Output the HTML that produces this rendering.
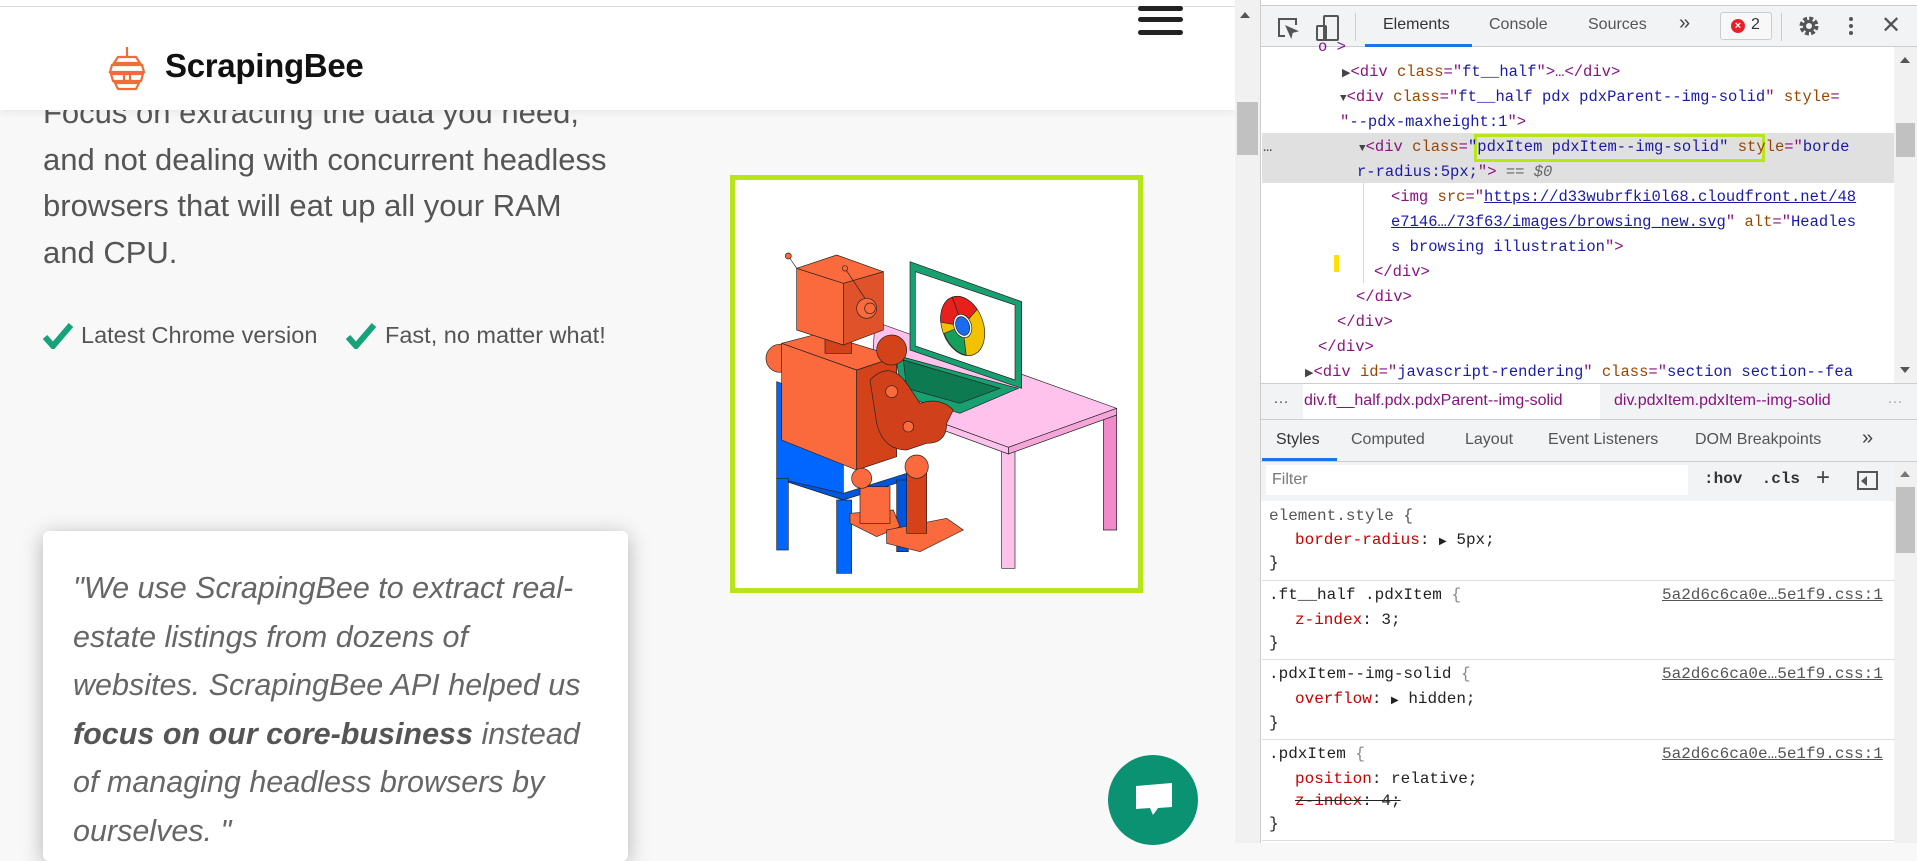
<!DOCTYPE html>
<html><head><meta charset="utf-8"><style>
*{margin:0;padding:0;box-sizing:border-box}
body{width:1917px;height:843px;overflow:hidden;position:relative;background:#f8f8f8;font-family:"Liberation Sans",sans-serif}
.a{position:absolute;white-space:nowrap}
.m{font-family:"Liberation Mono",monospace;font-size:16px}
.tg{color:#881280}.an{color:#994500}.av{color:#1a1aa6}.pn{color:#c80000}
</style></head><body>
<!-- page -->
<div class="a" style="left:43px;top:90px;font-size:31px;line-height:46.5px;color:#555;white-space:nowrap;width:620px">Focus on extracting the data you need,<br>and not dealing with concurrent headless<br>browsers that will eat up all your RAM<br>and CPU.</div>
<div class="a" style="left:0;top:0;width:1235px;height:110px;background:#fff;box-shadow:0 2px 8px rgba(0,0,0,.08);border-top:1px solid #fff">
 <div class="a" style="left:0;top:5px;width:1235px;height:1px;background:#ddd"></div>
 <svg class="a" style="left:106px;top:46px" width="42" height="44" viewBox="0 0 42 44" fill="none" stroke="#f26b3a" stroke-width="2.2"><line x1="21" y1="0" x2="21" y2="9"/><path d="M12 10h18l4 6H8zM6 18h30l2 7H4zM5 27h32l-2 7H7zM9 36h24l-3 6H12z"/><rect x="18" y="27" width="6" height="7"/></svg>
 <div class="a" style="left:165px;top:46px;font-size:33px;font-weight:bold;color:#111;letter-spacing:-0.3px">ScrapingBee</div>
 <div class="a" style="left:1138px;top:5px;width:45px;height:5px;background:#222;border-radius:3px"></div>
 <div class="a" style="left:1138px;top:16px;width:45px;height:5px;background:#222;border-radius:3px"></div>
 <div class="a" style="left:1138px;top:29px;width:45px;height:5px;background:#222;border-radius:3px"></div>
</div>
<svg class="a" style="left:43px;top:323px" width="30" height="26" viewBox="0 0 30 26"><path d="M2 14l8 9L28 2" stroke="#17a37a" stroke-width="6" fill="none"/></svg>
<div class="a" style="left:81px;top:322px;font-size:23.5px;color:#555">Latest Chrome version</div>
<svg class="a" style="left:346px;top:323px" width="30" height="26" viewBox="0 0 30 26"><path d="M2 14l8 9L28 2" stroke="#17a37a" stroke-width="6" fill="none"/></svg>
<div class="a" style="left:385px;top:322px;font-size:23.5px;color:#555">Fast, no matter what!</div>
<div class="a" style="left:730px;top:175px;width:413px;height:418px;border:5px solid #b8e41a;background:#fff"></div>
<svg class="a" style="left:760px;top:240px" width="360" height="340" viewBox="0 0 1080 1020" stroke="#222" stroke-width="2">
 <polygon points="725,630 765,615 765,985 725,985" fill="#ffc2ec"/><polygon points="1030,520 1070,505 1070,870 1030,870" fill="#f08acb"/>
 <polygon points="345,245 1070,505 745,622 330,470" fill="#ffc2ec"/>
 <polygon points="745,622 1070,505 1070,525 745,642" fill="#f5a5d8"/>
 <polygon points="330,470 745,622 745,642 330,490" fill="#ffc2ec"/>
 <polygon points="450,65 785,185 785,445 450,330" fill="#18a070"/>
 <polygon points="466,95 765,195 765,420 466,318" fill="#fff"/>
 <polygon points="405,345 775,445 600,520 430,470" fill="#18a070"/>
 <polygon points="430,360 720,445 600,490 440,445" fill="#0d7a52"/>
 <g transform="rotate(-20 608 258)"><ellipse cx="608" cy="258" rx="62" ry="92" fill="#f2c200"/><path d="M608 166a62 92 0 0 1 58 60L608 258z" fill="#e8201c"/><path d="M550 225a62 92 0 0 1 58-59L608 258z" fill="#e8201c"/><path d="M548 260a62 92 0 0 0 40 84L608 258z" fill="#14a05a"/><ellipse cx="608" cy="258" rx="26" ry="36" fill="#fff"/><ellipse cx="608" cy="258" rx="20" ry="29" fill="#1a6cf0"/></g>
 <polygon points="50,425 250,495 250,780 50,715" fill="#0066ff"/>
 <polygon points="50,715 250,780 440,720 440,700 250,760" fill="#0055dd"/>
 <rect x="50" y="715" width="35" height="215" fill="#0066ff"/><rect x="230" y="780" width="45" height="220" fill="#0066ff"/><rect x="410" y="720" width="35" height="215" fill="#0055dd"/>
 <polygon points="270,820 400,810 420,860 350,890 270,850" fill="#fa6a3c"/><polygon points="380,870 560,835 610,870 480,935 380,910" fill="#fa6a3c"/>
 <rect x="300" y="740" width="90" height="110" fill="#fa6a3c"/><rect x="440" y="690" width="60" height="190" fill="#d4421a"/>
 <circle cx="60" cy="355" r="42" fill="#fa6a3c"/>
 <polygon points="65,310 290,390 290,690 65,600" fill="#fa6a3c"/>
 <polygon points="290,390 410,350 410,650 290,690" fill="#d4421a"/>
 <polygon points="65,310 180,280 410,350 290,390" fill="#fa6a3c"/>
 <circle cx="395" cy="330" r="45" fill="#d4421a"/>
 <path d="M330 420q60-60 110 10l40 60q60-20 100 20l-20 40q0 60-60 60l-60 20q-70 0-90-80z" fill="#d0401a"/>
 <circle cx="395" cy="455" r="18" fill="#fa6a3c"/><circle cx="445" cy="560" r="16" fill="#fa6a3c"/>
 <circle cx="305" cy="715" r="30" fill="#fa6a3c"/><circle cx="470" cy="680" r="35" fill="#fa6a3c"/>
 <rect x="195" y="295" width="80" height="45" fill="#d4421a"/>
 <polygon points="110,85 250,130 250,315 110,270" fill="#fa6a3c"/>
 <polygon points="250,130 370,95 370,270 250,315" fill="#e0522a"/>
 <polygon points="110,85 230,45 370,95 250,130" fill="#fa6a3c"/>
 <circle cx="320" cy="205" r="30" fill="#fa6a3c"/><circle cx="330" cy="205" r="16" fill="#fa6a3c"/>
 <line x1="110" y1="85" x2="85" y2="48"/><circle cx="85" cy="48" r="9" fill="#fa6a3c"/>
 <line x1="255" y1="85" x2="315" y2="175"/><circle cx="255" cy="85" r="8" fill="#fa6a3c"/>
</svg>
<div class="a" style="left:43px;top:531px;width:585px;height:330px;background:#fff;border-radius:6px;box-shadow:0 4px 22px rgba(0,0,0,.28)"></div>
<div class="a" style="left:73px;top:564px;font-size:30.5px;line-height:48.6px;color:#666;font-style:italic;white-space:nowrap">"We use ScrapingBee to extract real-<br>estate listings from dozens of<br>websites. ScrapingBee API helped us<br><b style="color:#555">focus on our core-business</b> instead<br>of managing headless browsers by<br>ourselves. "</div>
<div class="a" style="left:1108px;top:755px;width:90px;height:90px;border-radius:50%;background:#0a9272"></div>
<svg class="a" style="left:1133px;top:780px" width="42" height="42" viewBox="0 0 42 42"><path d="M3 6l36-3v24l-14 1-5 7-3-7-14 1z" fill="#fff"/></svg>
<!-- page scrollbar -->
<div class="a" style="left:1235px;top:0;width:26px;height:843px;background:#f1f1f1;border-right:1px solid #ccc"></div>
<div class="a" style="left:1240px;top:12px;width:0;height:0;border:5px solid transparent;border-bottom:6px solid #555;border-top:0"></div>
<div class="a" style="left:1237px;top:102px;width:21px;height:53px;background:#c1c1c1"></div>
<!-- devtools -->
<div class="a" style="left:1261px;top:0;width:656px;height:843px;background:#fff"></div>
<div class="a" style="left:1261px;top:5px;width:656px;height:42px;background:#f1f3f4;border-top:1px solid #ccc;border-bottom:1px solid #cbcdd1"></div>
<svg class="a" style="left:1277px;top:17px" width="22" height="22" viewBox="0 0 22 22" fill="none" stroke="#555" stroke-width="2"><path d="M8 19H2V2h17v6"/><path d="M10 10l9 4-4 1-1 4z" fill="#555"/></svg>
<svg class="a" style="left:1316px;top:15px" width="24" height="26" viewBox="0 0 24 26" fill="none" stroke="#555" stroke-width="2"><rect x="8" y="1" width="14" height="24" rx="1"/><rect x="1" y="11" width="9" height="14" rx="1"/></svg>
<div class="a" style="left:1355px;top:13px;width:1px;height:28px;background:#ccc"></div>
<div class="a" style="left:1383px;top:16px;font-size:16px;color:#333">Elements</div>
<div class="a" style="left:1365px;top:44px;width:107px;height:3px;background:#1a73e8"></div>
<div class="a" style="left:1489px;top:16px;font-size:16px;color:#555">Console</div>
<div class="a" style="left:1588px;top:16px;font-size:16px;color:#555">Sources</div>
<div class="a" style="left:1679px;top:12px;font-size:20px;color:#444">»</div>
<div class="a" style="left:1720px;top:12px;width:52px;height:28px;border:1px solid #ccc;border-radius:3px;background:#f8f8f8"></div>
<div class="a" style="left:1731px;top:19px;width:14px;height:14px;border-radius:50%;background:#e8202a;color:#fff;font-size:11px;font-weight:bold;text-align:center;line-height:14px">×</div>
<div class="a" style="left:1751px;top:16px;font-size:16px;color:#333">2</div>
<div class="a" style="left:1781px;top:13px;width:1px;height:28px;background:#ccc"></div>
<svg class="a" style="left:1798px;top:15px" width="22" height="22" viewBox="0 0 22 22"><circle cx="11" cy="11" r="7" fill="none" stroke="#555" stroke-width="5" stroke-dasharray="3.5 2"/><circle cx="11" cy="11" r="6" fill="#555"/><circle cx="11" cy="11" r="3" fill="#f1f3f4"/></svg>
<div class="a" style="left:1849px;top:17px;width:4px;height:4px;border-radius:50%;background:#555;box-shadow:0 7px 0 #555,0 14px 0 #555"></div>
<div class="a" style="left:1881px;top:11px;font-size:24px;color:#555">✕</div>
<!-- dom tree -->
<div class="a" style="left:1262px;top:133px;width:632px;height:50px;background:#e0e0e0"></div>
<div class="a" style="left:1474px;top:134px;width:291px;height:28px;border:3px solid #b8e41a"></div>
<div class="a" style="left:1363px;top:183px;width:1px;height:100px;background:#c8d8ee"></div>
<div class="a" style="left:1334px;top:255px;width:5px;height:17px;background:#ffe000"></div>
<div class="a m" style="left:1262px;top:35px;width:632px;height:345px;overflow:hidden;line-height:25px;font-size:15.5px">
 <div class="a tg" style="left:56px;top:0">o &gt;</div>
 <div class="a" style="left:80px;top:25px"><span style="color:#444;font-size:11px">▶</span><span class="tg">&lt;div</span> <span class="an">class</span><span class="tg">="</span><span class="av">ft__half</span><span class="tg">"&gt;…&lt;/div&gt;</span></div>
 <div class="a" style="left:78px;top:50px"><span style="color:#444;font-size:11px">▼</span><span class="tg">&lt;div</span> <span class="an">class</span><span class="tg">="</span><span class="av">ft__half pdx pdxParent--img-solid</span><span class="tg">"</span> <span class="an">style</span><span class="tg">=</span></div>
 <div class="a" style="left:78px;top:75px"><span class="tg">"</span><span class="av">--pdx-maxheight:1</span><span class="tg">"&gt;</span></div>
 <div class="a" style="left:1px;top:100px;color:#444">…</div>
 <div class="a" style="left:97px;top:100px"><span style="color:#444;font-size:11px">▼</span><span class="tg">&lt;div</span> <span class="an">class</span><span class="tg">=</span><span class="av">"pdxItem pdxItem--img-solid"</span> <span class="an">style</span><span class="tg">="</span><span class="av">borde</span></div>
 <div class="a" style="left:95px;top:125px"><span class="av">r-radius:5px;</span><span class="tg">"&gt;</span> <span style="color:#666;font-style:italic">== $0</span></div>
 <div class="a" style="left:129px;top:150px"><span class="tg">&lt;img</span> <span class="an">src</span><span class="tg">="</span><span class="av" style="text-decoration:underline">https://d33wubrfki0l68.cloudfront.net/48</span></div>
 <div class="a" style="left:129px;top:175px"><span class="av" style="text-decoration:underline">e7146…/73f63/images/browsing_new.svg</span><span class="tg">"</span> <span class="an">alt</span><span class="tg">="</span><span class="av">Headles</span></div>
 <div class="a" style="left:129px;top:200px"><span class="av">s browsing illustration</span><span class="tg">"&gt;</span></div>
 <div class="a tg" style="left:112px;top:225px">&lt;/div&gt;</div>
 <div class="a tg" style="left:94px;top:250px">&lt;/div&gt;</div>
 <div class="a tg" style="left:75px;top:275px">&lt;/div&gt;</div>
 <div class="a tg" style="left:56px;top:300px">&lt;/div&gt;</div>
 <div class="a" style="left:43px;top:325px"><span style="color:#444;font-size:11px">▶</span><span class="tg">&lt;div</span> <span class="an">id</span><span class="tg">="</span><span class="av">javascript-rendering</span><span class="tg">"</span> <span class="an">class</span><span class="tg">="</span><span class="av">section section--fea</span></div>
</div>
<div class="a" style="left:1894px;top:47px;width:23px;height:336px;background:#f1f1f1"></div>
<div class="a" style="left:1900px;top:57px;border:5px solid transparent;border-bottom:6px solid #555;border-top:0"></div>
<div class="a" style="left:1896px;top:123px;width:19px;height:34px;background:#c1c1c1"></div>
<div class="a" style="left:1900px;top:367px;border:5px solid transparent;border-top:6px solid #555;border-bottom:0"></div>
<!-- breadcrumbs -->
<div class="a" style="left:1261px;top:383px;width:656px;height:37px;background:#f1f3f4;border-top:1px solid #cbcdd1;border-bottom:1px solid #cbcdd1"></div>
<div class="a" style="left:1273px;top:390px;font-size:16px;color:#555">…</div>
<div class="a" style="left:1303px;top:384px;width:297px;height:35px;background:#fff"></div>
<div class="a" style="left:1304px;top:392px;font-size:16px;color:#881280">div.ft__half.pdx.pdxParent--img-solid</div>
<div class="a" style="left:1614px;top:392px;font-size:16px;color:#881280">div.pdxItem.pdxItem--img-solid</div>
<div class="a" style="left:1887px;top:390px;font-size:16px;color:#aaa">…</div>
<!-- styles tabs -->
<div class="a" style="left:1261px;top:420px;width:656px;height:42px;background:#f1f3f4;border-bottom:1px solid #cbcdd1"></div>
<div class="a" style="left:1276px;top:431px;font-size:16px;color:#333">Styles</div>
<div class="a" style="left:1262px;top:458px;width:75px;height:3px;background:#1a73e8"></div>
<div class="a" style="left:1351px;top:431px;font-size:16px;color:#555">Computed</div>
<div class="a" style="left:1465px;top:431px;font-size:16px;color:#555">Layout</div>
<div class="a" style="left:1548px;top:431px;font-size:16px;color:#555">Event Listeners</div>
<div class="a" style="left:1695px;top:431px;font-size:16px;color:#555">DOM Breakpoints</div>
<div class="a" style="left:1862px;top:427px;font-size:20px;color:#444">»</div>
<div class="a" style="left:1261px;top:462px;width:633px;height:39px;background:#f1f3f4"></div>
<div class="a" style="left:1266px;top:465px;width:422px;height:30px;background:#fff"></div>
<div class="a" style="left:1272px;top:471px;font-size:16px;color:#777">Filter</div>
<div class="a m" style="left:1704px;top:470px;font-weight:bold;color:#333">:hov&nbsp;&nbsp;.cls</div>
<div class="a" style="left:1816px;top:464px;font-size:24px;color:#444">+</div>
<div class="a" style="left:1857px;top:471px;width:21px;height:19px;border:2px solid #555"></div>
<div class="a" style="left:1861px;top:476px;border:5px solid transparent;border-right:6px solid #555;border-left:0"></div>
<!-- rules -->
<div class="a m" style="left:1262px;top:501px;width:632px;height:342px;line-height:24px;color:#222">
 <div class="a" style="left:7px;top:3px;color:#555">element.style {</div>
 <div class="a" style="left:33px;top:27px"><span class="pn">border-radius</span>: <span style="font-size:10px">▶</span> 5px;</div>
 <div class="a" style="left:7px;top:50px">}</div>
 <div class="a" style="left:0;top:79px;width:632px;height:1px;background:#ddd"></div>
 <div class="a" style="left:7px;top:82px">.ft__half .pdxItem <span style="color:#888">{</span></div>
 <div class="a" style="left:400px;top:82px;color:#555;text-decoration:underline">5a2d6c6ca0e…5e1f9.css:1</div>
 <div class="a" style="left:33px;top:107px"><span class="pn">z-index</span>: 3;</div>
 <div class="a" style="left:7px;top:130px">}</div>
 <div class="a" style="left:0;top:158px;width:632px;height:1px;background:#ddd"></div>
 <div class="a" style="left:7px;top:161px">.pdxItem--img-solid <span style="color:#888">{</span></div>
 <div class="a" style="left:400px;top:161px;color:#555;text-decoration:underline">5a2d6c6ca0e…5e1f9.css:1</div>
 <div class="a" style="left:33px;top:186px"><span class="pn">overflow</span>: <span style="font-size:10px">▶</span> hidden;</div>
 <div class="a" style="left:7px;top:210px">}</div>
 <div class="a" style="left:0;top:238px;width:632px;height:1px;background:#ddd"></div>
 <div class="a" style="left:7px;top:241px">.pdxItem <span style="color:#888">{</span></div>
 <div class="a" style="left:400px;top:241px;color:#555;text-decoration:underline">5a2d6c6ca0e…5e1f9.css:1</div>
 <div class="a" style="left:33px;top:266px"><span class="pn">position</span>: relative;</div>
 <div class="a" style="left:33px;top:288px;text-decoration:line-through"><span class="pn">z-index</span>: 4;</div>
 <div class="a" style="left:7px;top:311px">}</div>
 <div class="a" style="left:0;top:339px;width:632px;height:1px;background:#ddd"></div>
</div>
<div class="a" style="left:1894px;top:462px;width:23px;height:381px;background:#f1f1f1"></div>
<div class="a" style="left:1900px;top:471px;border:5px solid transparent;border-bottom:6px solid #777;border-top:0"></div>
<div class="a" style="left:1896px;top:487px;width:19px;height:66px;background:#c1c1c1"></div>
</body></html>
